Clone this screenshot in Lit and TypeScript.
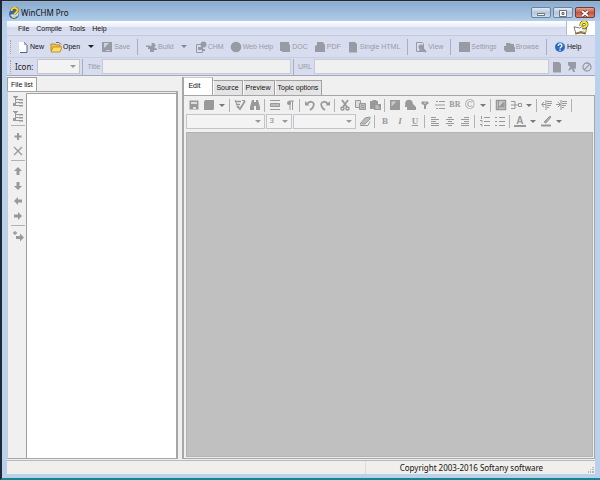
import { LitElement, html, svg, css, nothing } from "lit";
import type { SVGTemplateResult } from "lit";
import { customElement, property } from "lit/decorators.js";

const tree = svg`<path d="M1 1.500h5M3.500 1v8M4 4.500h3M4 7.500h3M4 10.500h3" fill="none" stroke="currentColor"/><path d="M7 4h4v1.500H7zM7 7h4v1.500H7zM7 10h4v1.500H7zM1 8h3v3H1zM2 1h3v2H2z" fill="currentColor"/>`;
const lines = (rows: string) => svg`<path d=${rows} stroke="currentColor" fill="none"/>`;
const up = "M6 2l4 4H7.500v4h-3V6H2z";

const icons: Record<string, SVGTemplateResult> = {
  app: svg`<circle cx="6" cy="7" r="5" fill="#3a64a8"/><path d="M2 8l3 3 5-2 1-4-6 2z" fill="#c3daf0"/><path d="M3.500 4c0-4 6-4 6-.5 0 2-3 2-3 4" fill="none" stroke="#735800" stroke-width="2.600"/><path d="M3.500 4c0-4 6-4 6-.5 0 2-3 2-3 4M6.500 9v2" fill="none" stroke="#f7d72c" stroke-width="1.800"/>`,
  book: svg`<path d="M0 5l1.500 5.500 4.500-1.500 4 1 1-5-3-1-3 2z" fill="#fff" stroke="#444" stroke-width=".6"/><path d="M1 11l5-1 4 1" stroke="#806020" fill="none"/><path d="M6 4c0-4 5-4 5-1 0 2-2.500 1.500-2.500 4" fill="none" stroke="#333" stroke-width="2.800"/><path d="M6 4c0-4 5-4 5-1 0 2-2.500 1.500-2.500 3.500M8.500 8v1" fill="none" stroke="#ffe91e" stroke-width="1.900"/>`,
  new: svg`<path d="M2 1h5l3 3v8H2z" fill="#fff"/><path d="M7 1l3 3v7.500H3" fill="none" stroke="#4b668c"/><path d="M7 1v3h3" fill="#9db7d4"/>`,
  open: svg`<path d="M1 10V3h4l1 1h4v2" fill="#f4c542" stroke="#b98a24"/><path d="M1 11l2-5h9l-2 5z" fill="#ffe06b" stroke="#c2922a"/><path d="M6 1.500h3l2 2" stroke="#668" fill="none"/>`,
  save: svg`<path d="M1 1h10v10H1z" fill="currentColor"/><path d="M3 2h5L3 7z" fill="#d0d3e6"/><path d="M5 9h4v1H5z" fill="#c8cbdc"/>`,
  build: svg`<path d="M1 4.500h4l1 1 1-2.500-1-1h3l2 3-2 1 3 2v1H9v2H5V8H3V6H1z" fill="currentColor"/>`,
  chm: svg`<path d="M1.500 3.500h6v8h-6z" fill="none" stroke="currentColor"/><circle cx="8.500" cy="3.500" r="3" fill="currentColor"/><path d="M3 6h4v3H3zM8 8h2v2H8z" fill="currentColor"/>`,
  globe: svg`<circle cx="6" cy="6" r="5.300" fill="currentColor"/>`,
  doc: svg`<path d="M1 1h9v2l1 1v7H3v-1H1z" fill="currentColor"/>`,
  pdf: svg`<path d="M3 1h6l2 3v7H1V5l2-1z" fill="currentColor"/>`,
  page: svg`<path d="M2 1h6l2 2v8.500H2z" fill="currentColor"/>`,
  view: svg`<path d="M1.500 1.500h6l1 1v8h-7z" fill="none" stroke="currentColor"/><circle cx="6" cy="6" r="2.500" fill="currentColor"/><path d="M7 7l4 4M4 9.500h5" stroke="currentColor" stroke-width="2"/>`,
  settings: svg`<path d="M1 1h11v10H1z" fill="currentColor"/>`,
  folder: svg`<path d="M3 2h4l1 1h3v3h1v5H3L1 9V5h2z" fill="currentColor"/>`,
  help: svg`<circle cx="6" cy="6" r="5" fill="#2a6cc0"/><path d="M2 3a5 5 0 018 0" stroke="#9cc8f2" fill="none"/><path d="M4.300 5c0-3 4-2.500 3.500 0-.2 1-1.800 1-1.800 2.500M6 8.500v1.300" fill="none" stroke="#fff" stroke-width="1.300"/>`,
  picker: svg`<path d="M2 1h8v7l-2-1 1 4H7L6 8 2 10l2-4-2-2z" fill="currentColor"/>`,
  ban: svg`<circle cx="6" cy="6" r="4" fill="none" stroke="currentColor" stroke-width="1.300"/><path d="M3 9l6-6" stroke="currentColor" stroke-width="1.300"/>`,
  tree,
  plus: svg`<path d="M6 3v7M2.500 6.500h7" stroke="currentColor" stroke-width="2"/>`,
  cross: svg`<path d="M2 2l8 8M10 2l-8 8" stroke="currentColor" stroke-width="1.300"/>`,
  up: svg`<path d=${up} fill="currentColor"/>`,
  down: svg`<path d=${up} transform="rotate(180 6 6)" fill="currentColor"/>`,
  left: svg`<path d=${up} transform="rotate(270 6 6)" fill="currentColor"/>`,
  right: svg`<path d=${up} transform="rotate(90 6 6)" fill="currentColor"/>`,
  promote: svg`<path d="M3 1v4M1 3h4" stroke="currentColor" stroke-width="1.300"/><path d="M4 6h4V3.500L12 7.500l-4 4V9H4z" fill="currentColor"/>`,
  disk: svg`<path d="M1.500 1.500h9v9h-9z" fill="currentColor"/><path d="M3 3h6v2H3zM5 8h3v2H5z" fill="#ddd"/>`,
  image: svg`<path d="M2 1h9v9l-1 1H1V3z" fill="currentColor"/>`,
  spell: svg`<path d="M1 2.500h6M2 5.500h4" stroke="currentColor" stroke-width="1.500"/><path d="M3 7l3 3 5-8" fill="none" stroke="currentColor" stroke-width="1.800"/><path d="M1 1l2 5M8 1.500h3" stroke="currentColor"/>`,
  find: svg`<path d="M3 1h2v2h2V1h2l2 7v3H7V7H5v4H1V8z" fill="currentColor"/>`,
  pagebreak: svg`<path d="M1 1.500h10M1 10.500h10" stroke="currentColor"/><path d="M1.500 4.500h9v3h-9z" fill="#bbb" stroke="currentColor"/>`,
  para: svg`<path d="M6 2v9M8.500 2v9M5 2h5" stroke="currentColor"/><circle cx="5" cy="4" r="2" fill="currentColor"/>`,
  undo: svg`<path d="M1 2v4.500h4.500z" fill="currentColor"/><path d="M3 5C6 1 11 3 9.500 7c-.5 2-2 3-3.500 4" fill="none" stroke="currentColor" stroke-width="1.800"/>`,
  redo: svg`<path d="M11 2v4.500H6.500z" fill="currentColor"/><path d="M9 5C6 1 1 3 2.500 7c.5 2 2 3 3.500 4" fill="none" stroke="currentColor" stroke-width="1.800"/>`,
  cut: svg`<path d="M3 1l5 7M9 1L4 8" stroke="currentColor" stroke-width="1.800"/><circle cx="3.500" cy="9.500" r="1.500" fill="none" stroke="currentColor" stroke-width="1.500"/><circle cx="8.500" cy="9.500" r="1.500" fill="none" stroke="currentColor" stroke-width="1.500"/>`,
  copy: svg`<path d="M1.500 1.500h5v7h-5z" fill="#ddd" stroke="currentColor"/><path d="M5.500 4.500h6v6h-6z" fill="#bbb" stroke="currentColor"/><path d="M7 6.500h3M7 8.500h3" stroke="currentColor"/>`,
  paste: svg`<path d="M1 2h2l1-1h3l1 1h1v3h3v6H5v-1H1z" fill="currentColor"/><path d="M6.500 7h3M6.500 9h4" stroke="#ddd"/>`,
  picture: svg`<path d="M1 1h10v10H1z" fill="currentColor"/><path d="M2.500 2.500h5l-5 5z" fill="#ccc"/>`,
  link: svg`<circle cx="5" cy="4.500" r="3.800" fill="currentColor"/><path d="M5 5h4l3 3v3H3V8H1V6z" fill="currentColor"/>`,
  anchor: svg`<path d="M2.500 2.500h6L10 4 7.500 6 7 7v3H5V6L2.500 5z" fill="currentColor"/><path d="M5 4h2" stroke="#ddd"/>`,
  rule: svg`<path d="M1 6h10M2 2.500h2m1 0h6M2 9.500h2m1 0h6" stroke="currentColor" stroke-width="1.200"/>`,
  table: svg`<path d="M1.500 1.500h9v9h-9z" fill="#ccc" stroke="currentColor" stroke-width="1.500"/><path d="M3.500 2v8M4 8l5-5v5z" fill="currentColor" stroke="currentColor"/>`,
  split: svg`<path d="M1 2.500h4v7H1M1 6h7M8.500 4.500h3v3h-3z" fill="none" stroke="currentColor"/>`,
  outdent: svg`<path d="M5 1v10M1 5.500h4M3 3L.7 5.500 3 8M6 2.500h5M6 4.500h5M6 6.500h4M6 8.500h2" fill="none" stroke="currentColor"/>`,
  indent: svg`<path d="M5 1v10M0 5.500h4M2 3l2.500 2.500L2 8M6 2.500h5M6 4.500h5M6 6.500h4M6 8.500h2" fill="none" stroke="currentColor"/>`,
  eraser: svg`<path d="M1 9l5-6 5-1v2L6 9z" fill="#bbb" stroke="currentColor"/><path d="M1 10.500h8l2-4" fill="none" stroke="currentColor"/>`,
  alignl: lines("M2 2.500h5M2 4.500h8M2 6.500h5M2 8.500h8M2 10.500h8"),
  alignc: lines("M4 2.500h4M2 4.500h8M4 6.500h4M2 8.500h8M4 10.500h4"),
  alignr: lines("M5 2.500h5M2 4.500h8M5 6.500h5M2 8.500h8M2 10.500h8"),
  numbers: lines("M5 2.500h6M5 6.500h6M5 10.500h6M2.500 1v3M1 5.500h2v2M1 9.500h2v2"),
  bullets: lines("M5 2.500h6M5 6.500h6M5 10.500h6M1 2.500h2M1 6.500h2M1 10.500h2"),
  marker: svg`<path d="M4 7l6-6 1 1-5 6z" fill="#aaa" stroke="currentColor"/><path d="M1 10.500h10" stroke="currentColor" stroke-width="2"/>`,
  min: svg`<path d="M2.500 5.500h7v2h-7z" fill="#fff" stroke="#555" stroke-width=".8"/>`,
  max: svg`<path d="M2.500 2.500h7v6h-7z" fill="#fff" stroke="#555" stroke-width=".8"/><path d="M5 4.500h2v2H5z" fill="#bcd" stroke="#555" stroke-width=".8"/>`,
  close: svg`<path d="M3 3l6 5M9 3L3 8" stroke="#67302a" stroke-width="3.200"/><path d="M3 3l6 5M9 3L3 8" stroke="#fff" stroke-width="1.800"/>`,
};

const icon = (name: string) => html`<svg class="icon" viewBox="0 0 12 12" aria-hidden="true">${icons[name]}</svg>`;

const base = css`
  * { box-sizing: border-box; }
  button, input, select {
    font: inherit; color: inherit; margin: 0; padding: 0;
    border: 0; border-radius: 0; background: none; min-width: 0; white-space: nowrap;
  }
  .icon { width: 12px; height: 12px; flex: none; display: block; }
  .arrow::after {
    content: ""; display: block;
    border: 3px solid transparent; border-top-color: currentColor; border-bottom-width: 0;
  }
`;

/** Compact strip of icon buttons; "|" is a divider, "v" a drop-down arrow. */
@customElement("icon-strip")
export class IconStrip extends LitElement {
  @property({ type: Array }) items: string[] = [];
  @property({ type: Boolean, reflect: true }) vertical = false;

  static styles = [base, css`
    :host { display: flex; align-items: center; color: #999; }
    :host([vertical]) { flex-direction: column; }
    button { width: 15px; height: 15px; display: grid; place-items: center; flex: none; }
    .arrow { width: 11px; color: #777; }
    .divider { flex: none; width: 1px; height: 13px; margin: 0 2px; background: #b2b2b2; }
    :host([vertical]) .divider { width: 14px; height: 1px; margin: 2px 0; }
    .letter { font: bold 9px/12px "Liberation Serif", serif; }
    .small { font-size: 8px; }
    .italic { font-style: italic; }
    .underline { text-decoration: underline; }
    .color { font: bold 10px/9px "Liberation Sans", sans-serif; border-bottom: 2px solid; padding: 0 2px; }
    .sign { font: 13px/12px "Liberation Sans", sans-serif; }
  `];

  private glyph(name: string) {
    switch (name) {
      case "B": return html`<span class="letter">B</span>`;
      case "I": return html`<span class="letter italic">I</span>`;
      case "U": return html`<span class="letter underline">U</span>`;
      case "BR": return html`<span class="letter small">BR</span>`;
      case "A": return html`<span class="color">A</span>`;
      case "©": return html`<span class="sign">©</span>`;
      default: return icon(name);
    }
  }

  render() {
    return this.items.map((name) =>
      name === "|" ? html`<span class="divider"></span>`
        : name === "v" ? html`<button class="arrow" aria-label="more"></button>`
        : html`<button aria-label=${name}>${this.glyph(name)}</button>`);
  }
}

interface Tool { icon: string; label: string; on?: boolean; menu?: boolean; end?: boolean; }

const tools: Tool[] = [
  { icon: "new", label: "New", on: true },
  { icon: "open", label: "Open", on: true, menu: true },
  { icon: "save", label: "Save", end: true },
  { icon: "build", label: "Build", menu: true },
  { icon: "chm", label: "CHM" },
  { icon: "globe", label: "Web Help" },
  { icon: "doc", label: "DOC" },
  { icon: "pdf", label: "PDF" },
  { icon: "page", label: "Single HTML", end: true },
  { icon: "view", label: "View", end: true },
  { icon: "settings", label: "Settings" },
  { icon: "folder", label: "Browse", end: true },
  { icon: "help", label: "Help", on: true },
];

@customElement("app-root")
export class AppRoot extends LitElement {
  static styles = [base, css`
    :host {
      display: flex; flex-direction: column; min-height: 100vh; color: #111;
      font: 7px/12px "Liberation Sans", Arial, sans-serif;
      background: #b9d1ec; box-sizing: border-box;
      border: solid #1f2835; border-width: 1px 0 0 2px;
      border-bottom: 2px solid #16868c;
    }
    .titlebar {
      display: flex; align-items: center; height: 20px; padding: 2px 5px 0 6px;
      background: linear-gradient(#8aaccf, #9bbadb 45%, #b0cdea);
      border-top: 1px solid #9fb2c8;
    }
    .titlebar h1 { flex: 1; margin: 0; padding-left: 1px; font: 8px/12px "Noto Sans", sans-serif; }
    .caption {
      width: 20px; height: 11px; display: grid; place-items: center; margin-left: 2px;
      border: 1px solid #6f8299; border-radius: 2px;
      background: linear-gradient(#dfeaf6, #b4c8de 50%, #c9dbee);
    }
    .caption.red { background: linear-gradient(#e3a797, #c8533b 50%, #d9806a); border-color: #6f3e3c; }
    .frame { flex: 1; display: flex; flex-direction: column; margin: 0 5px 4px 5px; background: #f0f0f0; }
    .menubar {
      display: flex; align-items: stretch; height: 15px; padding-left: 11px; gap: 7px;
      background: linear-gradient(#fff, #e9edf8 40%, #d5dbee 45%, #dadff2);
      border-bottom: 1px solid #c3c8dd;
    }
    .menubar button { padding-top: 2px; }
    .menubar .brand { margin-left: auto; width: 29px; display: grid; place-items: center; background: #fff; border-left: 1px solid #b4b9ca; }
    .brand .icon { width: 18px; height: 14px; }
    .bar { display: flex; align-items: center; background: #d8dcef; color: #999ba4; }
    .grip { border-left: 1px dotted #9ea3ba; height: 14px; margin: 0 3px; }
    .tools { height: 22px; border-bottom: 1px solid #c8ccdf; }
    .tool { display: flex; align-items: center; gap: 1px; padding: 0 3px; color: #999ba4; }
    .tool.on { color: #111; }
    .arrow { width: 15px; display: grid; place-items: center; color: #85889a; }
    .arrow.on { color: #222; }
    .divider { width: 1px; height: 16px; margin: 0 4px; background: #a9adc1; }
    .address { height: 18px; border-bottom: 1px solid #a3a5bb; }
    .address .divider { margin: 0 2px; }
    .address label { padding: 0 2px; }
    .address .first { color: #222; padding: 0 4px 0 1px; font: 8px/12px "Noto Sans", sans-serif; }
    .field { height: 15px; flex: 1; background: #f0f0f0; border: 1px solid #c6c9d6; }
    .address .grow { flex: 5; }
    .name { flex: 4; }
    .select { position: relative; display: flex; color: #888; background: #f3f3f3; border: 1px solid #c4c4c8; height: 15px; }
    .select select { appearance: none; width: 100%; padding-left: 2px; line-height: 12px; font-size: 8px; }
    .select::after {
      content: ""; position: absolute; right: 3px; top: 5px; pointer-events: none;
      border: 3px solid transparent; border-top-color: #999; border-bottom-width: 0;
    }
    .w-icon { width: 43px; }
    .w-style { width: 79px; }
    .w-size { width: 26px; }
    .w-font { width: 63px; }
    .extras { display: flex; gap: 3px; padding: 0 2px; }
    .body { flex: 1; display: flex; gap: 4px; padding: 1px 0; }
    .panel { display: flex; flex-direction: column; min-width: 0; }
    .files { flex: 172; }
    .editor { flex: 412; border-left: 2px solid #a8a8a8; }
    .tabs { display: flex; align-items: flex-end; }
    .tab { padding: 0 3px 0 2px; height: 15px; background: #e4e4e4; border: 1px solid #a0a0a0; border-left-color: #fff; border-bottom: 0; }
    .tab.active { background: #fff; padding: 0 3px; border-left-color: #a0a0a0; }
    .editor .tab.active { width: 29px; height: 18px; padding: 0 0 2px 4px; text-align: left; border-left: 0; border-top-color: #c8c8c8; }
    .files .tabs, .files .tab { height: 14px; }
    .sheet { flex: 1; display: flex; border: 1px solid #a6a6a6; padding: 1px; }
    .files .sheet { border-right-width: 2px; border-left-color: #ccc; padding: 1px 0 0 1px; }
    .files icon-strip { width: 17px; }
    .list { flex: 1; background: #fff; border: 1px solid #a0a0a0; border-width: 1px 0 0 1px; }
    .editor .sheet { flex-direction: column; border-left: 0; padding-left: 2px; }
    .row { display: flex; align-items: center; height: 16px; }
    .fields { gap: 1px; }
    .canvas { flex: 1; background: #c0c0c0; border: 1px solid #b2b2b2; margin-top: 3px; }
    .status { display: flex; height: 14px; border-top: 1px solid #b8b8b8; background: #f0efeb; font: 8px/13px "Noto Sans", sans-serif; }
    .status .left { flex: 1; border-right: 1px solid #ddd; }
    .status .right { flex: 0 0 39%; padding-left: 34px; white-space: nowrap; position: relative; }
    .resize { position: absolute; right: 1px; bottom: 1px; width: 6px; height: 6px; color: #b5b5b5; }
  `];

  render() {
    return html`
      <header class="titlebar">
        ${icon("app")}
        <h1>WinCHM Pro</h1>
        <button class="caption" aria-label="Minimize">${icon("min")}</button>
        <button class="caption" aria-label="Maximize">${icon("max")}</button>
        <button class="caption red" aria-label="Close">${icon("close")}</button>
      </header>
      <div class="frame">
        <nav class="menubar">
          ${["File", "Compile", "Tools", "Help"].map((m) => html`<button>${m}</button>`)}
          <span class="brand">${icon("book")}</span>
        </nav>
        <div class="bar tools">
          <span class="grip"></span>
          ${tools.map((t) => html`
            <button class="tool ${t.on ? "on" : ""}">${icon(t.icon)}<span>${t.label}</span></button>
            ${t.menu ? html`<button class="arrow ${t.on ? "on" : ""}" aria-label="${t.label} options"></button>` : nothing}
            ${t.end ? html`<span class="divider"></span>` : nothing}`)}
        </div>
        <div class="bar address">
          <span class="grip"></span>
          <label class="first" for="icon">Icon:</label>
          <span class="select w-icon"><select id="icon"><option></option></select></span>
          <span class="divider"></span>
          <label for="title">Title</label>
          <input class="field name" id="title">
          <span class="divider"></span>
          <label for="url">URL</label>
          <input class="field grow" id="url">
          <span class="extras">${icon("page")}${icon("picker")}${icon("ban")}</span>
        </div>
        <main class="body">
          <section class="panel files">
            <div class="tabs"><button class="tab active">File list</button></div>
            <div class="sheet">
              <icon-strip vertical .items=${["tree", "tree", "|", "plus", "cross", "|", "up", "down", "left", "right", "|", "promote"]}></icon-strip>
              <div class="list"></div>
            </div>
          </section>
          <section class="panel editor">
            <div class="tabs">
              <button class="tab active">Edit</button>
              ${["Source", "Preview", "Topic options"].map((t) => html`<button class="tab">${t}</button>`)}
            </div>
            <div class="sheet">
              <div class="row">
                <icon-strip .items=${["disk", "image", "v", "|", "spell", "find", "|", "pagebreak", "para", "|", "undo", "redo", "|", "cut", "copy", "paste", "|", "picture", "link", "anchor", "rule", "BR", "©", "v", "|", "table", "split", "v", "|", "outdent", "indent", "|"]}></icon-strip>
              </div>
              <div class="row fields">
                <span class="select w-style"><select aria-label="Style"><option></option></select></span>
                <span class="select w-size"><select aria-label="Size"><option>3</option></select></span>
                <span class="select w-font"><select aria-label="Font"><option></option></select></span>
                <icon-strip .items=${["eraser", "|", "B", "I", "U", "|", "alignl", "alignc", "alignr", "|", "numbers", "bullets", "|", "A", "v", "marker", "v"]}></icon-strip>
              </div>
              <div class="canvas"></div>
            </div>
          </section>
        </main>
        <footer class="status">
          <span class="left"></span>
          <span class="right">Copyright 2003-2016 Softany software
            <svg class="resize" viewBox="0 0 6 6" aria-hidden="true"><path d="M4 0h2v1H4zM2 2h1v1H2zM4 2h2v1H4zM0 4h1v2H0zM2 4h1v2H2zM4 4h2v2H4z" fill="currentColor"/></svg>
          </span>
        </footer>
      </div>`;
  }
}
